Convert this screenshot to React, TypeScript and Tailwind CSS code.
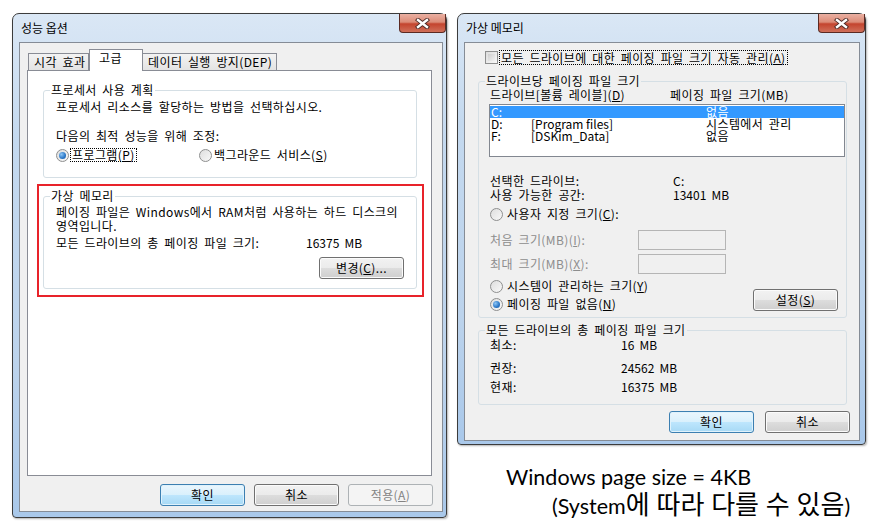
import React from "react";

const ui =
  "font-['Noto_Sans_CJK_KR',sans-serif] text-[12px] leading-[14px] text-black tracking-[0.4px] [word-spacing:2.5px]";

function CloseButton() {
  return (
    <div className="w-[47px] h-[19px] rounded-b-[4px] border border-t-0 border-[#5b2a22] bg-[linear-gradient(180deg,#eab0a2,#dc8c78_45%,#c4442e_55%,#d0705a)] flex items-center justify-center">
      <svg width="15" height="11" viewBox="0 0 15 11">
        <path d="M3 2 L12 9 M12 2 L3 9" stroke="#4a2a26" strokeWidth="4.2" strokeLinecap="square" />
        <path d="M3 2 L12 9 M12 2 L3 9" stroke="#ffffff" strokeWidth="2.4" strokeLinecap="square" />
      </svg>
    </div>
  );
}

function Frame({ title, className, children }: { title: string; className: string; children: React.ReactNode }) {
  return (
    <div
      className={`flex flex-col border border-[#3c3c3c] rounded-t-[7px] rounded-b-[4px] bg-[linear-gradient(180deg,#dae7f5,#c4d9ef_25%,#bcd3ec_70%,#a9c8ea)] shadow-[1px_1px_2px_rgba(0,0,0,0.3)] ${className}`}
    >
      <div className="h-[28px] flex items-start justify-between pl-[8px]">
        <div className="pt-[7px] tracking-normal [word-spacing:normal]">{title}</div>
        <CloseButton />
      </div>
      {children}
    </div>
  );
}

function Group({ legend, className, children }: { legend: string; className?: string; children: React.ReactNode }) {
  return (
    <fieldset className={`border border-[#d5dfe5] rounded-[3px] ${className ?? ""}`}>
      <legend className="ml-[6px] px-[1px] leading-[14px]">{legend}</legend>
      {children}
    </fieldset>
  );
}

function Radio({ checked, disabled }: { checked?: boolean; disabled?: boolean }) {
  return (
    <span
      className={`w-[13px] h-[13px] shrink-0 rounded-full border flex items-center justify-center ${
        disabled ? "border-[#b8b8b8] bg-[#f4f4f4]" : "border-[#8e8f8f] bg-[linear-gradient(135deg,#dedede,#f8f8f8)]"
      }`}
    >
      {checked && (
        <span className="w-[7px] h-[7px] rounded-full bg-[radial-gradient(circle_at_35%_35%,#8cc5f5,#2a76c6_60%,#1b5aa0)]" />
      )}
    </span>
  );
}

function Button({ label, kind = "normal", className }: { label: React.ReactNode; kind?: "default" | "normal" | "disabled"; className?: string }) {
  const look =
    kind === "default"
      ? "border-[#3c7fb1] bg-[linear-gradient(180deg,#eaf6fd,#d9f0fc_50%,#bee6fd_50%,#a7d9f5)] shadow-[inset_0_0_0_1px_#dff2fc]"
      : kind === "disabled"
      ? "border-[#adb2b5] bg-[#f4f4f4] text-[#838383]"
      : "border-[#707070] bg-[linear-gradient(180deg,#f2f2f2,#ebebeb_50%,#dddddd_50%,#cfcfcf)] shadow-[inset_0_0_0_1px_#fbfbfb]";
  return (
    <div className={`h-[22px] w-[85px] rounded-[3px] border flex items-center justify-center ${look} ${className ?? ""}`}>
      {label}
    </div>
  );
}

function PerformanceOptions() {
  return (
    <Frame title="성능 옵션" className="w-[435px] h-[505px]">
      <div className="flex-1 ml-[6px] mr-[3px] mb-[5px] border border-[#858c96] bg-[#f0f0f0] flex flex-col pt-[6px]">
        <div className="ml-[7px] mr-[10px] flex-1 flex flex-col">
          <div className="flex items-end h-[21px] pl-[1px]">
            <div className="w-[61px] h-[17px] border border-b-0 border-[#898c95] bg-[linear-gradient(180deg,#f3f3f3,#e3e3e3)] flex items-center pl-[5px]">
              시각 효과
            </div>
            <div className="relative z-10 w-[54px] h-[22px] -mb-[1px] border border-b-0 border-[#898c95] bg-white pl-[9px] pt-[1px]">
              고급
            </div>
            <div className="w-[134px] h-[17px] border border-b-0 border-l-0 border-[#898c95] bg-[linear-gradient(180deg,#f3f3f3,#e3e3e3)] flex items-center pl-[5px]">
              데이터 실행 방지(DEP)
            </div>
          </div>
          <div className="flex-1 border border-[#898c95] bg-white pt-[12px]">
            <Group legend="프로세서 사용 계획" className="ml-[15px] mr-[14px]">
              <div className="pl-[12px] pt-[3px] pb-[15px]">
                <div>프로세서 리소스를 할당하는 방법을 선택하십시오.</div>
                <div className="mt-[15px]">다음의 최적 성능을 위해 조정:</div>
                <div className="mt-[5px] flex items-center">
                  <div className="w-[143px] flex items-center">
                    <Radio checked />
                    <span className="ml-[1px] px-[1px] border border-dotted border-black leading-[12px]">
                      프로그램(<u>P</u>)
                    </span>
                  </div>
                  <Radio />
                  <span className="ml-[2px]">
                    백그라운드 서비스(<u>S</u>)
                  </span>
                </div>
              </div>
            </Group>
            <div className="mt-[6px] ml-[9px] mr-[7px] border-2 border-[#e8232a] pt-[3px] pl-[4px] pr-[5px] pb-[6px]">
              <Group legend="가상 메모리">
                <div className="pl-[12px] pt-[2px] pb-[9px]">
                  <div>
                    페이징 파일은 Windows에서 RAM처럼 사용하는 하드 디스크의
                    <br />
                    영역입니다.
                  </div>
                  <div className="mt-[3px] flex">
                    <span className="w-[250px]">모든 드라이브의 총 페이징 파일 크기:</span>
                    <span className="tracking-normal">16375 MB</span>
                  </div>
                  <div className="mt-[7px] flex justify-end pr-[12px]">
                    <Button label={<span>변경(<u>C</u>)...</span>} />
                  </div>
                </div>
              </Group>
            </div>
          </div>
        </div>
        <div className="mt-[8px] mb-[5px] pr-[9px] flex justify-end gap-[9px]">
          <Button label="확인" kind="default" />
          <Button label="취소" />
          <Button label={<span>적용(<u>A</u>)</span>} kind="disabled" />
        </div>
      </div>
    </Frame>
  );
}

const drives = [
  { d: "C:", label: "", size: "없음", sel: true },
  { d: "D:", label: "[Program files]", size: "시스템에서 관리" },
  { d: "F:", label: "[DSKim_Data]", size: "없음" },
];

function VirtualMemory() {
  return (
    <Frame title="가상 메모리" className="w-[409px] h-[432px]">
      <div className="flex-1 ml-[6px] mr-[5px] mb-[3px] border border-[#858c96] bg-[#f0f0f0] flex flex-col">
        <div className="pt-[7px] pl-[20px] flex items-center">
          <span className="w-[13px] h-[13px] border border-[#8e8f8f] bg-[linear-gradient(135deg,#dcdcdc,#f8f8f8)] p-[2px]">
            <span className="block w-full h-full bg-[linear-gradient(135deg,#cfcfcf,#f2f2f2)]" />
          </span>
          <span className="ml-[1px] px-[1px] border border-dotted border-black leading-[13px]">
            모든 드라이브에 대한 페이징 파일 크기 자동 관리(<u>A</u>)
          </span>
        </div>

        <Group legend="드라이브당 페이징 파일 크기" className="mt-[9px] ml-[13px] mr-[12px]">
          <div className="flex pl-[11px] leading-[13px]">
            <span className="w-[180px]">
              드라이브[볼륨 레이블](<u>D</u>)
            </span>
            <span>페이징 파일 크기(MB)</span>
          </div>
          <div className="mt-[3px] ml-[10px] w-[356px] h-[53px] border border-[#828790] bg-white pt-[1px] tracking-normal [word-spacing:normal]">
            {drives.map((r) => (
              <div
                key={r.d}
                className={`flex h-[12px] leading-[12px] pl-[1px] ${r.sel ? "bg-[#3399ff] text-white" : ""}`}
              >
                <span className="w-[40px]">{r.d}</span>
                <span className="w-[175px]">{r.label}</span>
                <span className="tracking-[0.4px] [word-spacing:2.5px]">{r.size}</span>
              </div>
            ))}
          </div>
          <div className="pl-[11px] pb-[6px]">
            <div className="mt-[17px] flex">
              <span className="w-[183px]">선택한 드라이브:</span>
              <span>C:</span>
            </div>
            <div className="flex">
              <span className="w-[183px]">사용 가능한 공간:</span>
              <span className="tracking-normal">13401 MB</span>
            </div>
            <div className="mt-[5px] flex items-center gap-[4px]">
              <Radio />
              <span>
                사용자 지정 크기(<u>C</u>):
              </span>
            </div>
            <div className="mt-[9px] flex items-center h-[20px] text-[#8d8d8d]">
              <span className="w-[148px]">
                처음 크기(MB)(<u>I</u>):
              </span>
              <span className="w-[88px] h-[20px] border border-[#b5b5b5] bg-[#f0f0f0]" />
            </div>
            <div className="mt-[4px] flex items-center h-[20px] text-[#8d8d8d]">
              <span className="w-[148px]">
                최대 크기(MB)(<u>X</u>):
              </span>
              <span className="w-[88px] h-[20px] border border-[#b5b5b5] bg-[#f0f0f0]" />
            </div>
            <div className="mt-[5px] flex items-end justify-between pr-[8px]">
              <div className="flex flex-col gap-[4px]">
                <div className="flex items-center gap-[4px]">
                  <Radio />
                  <span>
                    시스템이 관리하는 크기(<u>Y</u>)
                  </span>
                </div>
                <div className="flex items-center gap-[4px]">
                  <Radio checked />
                  <span>
                    페이징 파일 없음(<u>N</u>)
                  </span>
                </div>
              </div>
              <Button label={<span>설정(<u>S</u>)</span>} />
            </div>
          </div>
        </Group>

        <Group legend="모든 드라이브의 총 페이징 파일 크기" className="mt-[5px] ml-[13px] mr-[12px]">
          <div className="pl-[11px] pt-[1px] pb-[10px]">
            <div className="flex">
              <span className="w-[131px]">최소:</span>
              <span className="tracking-normal">16 MB</span>
            </div>
            <div className="mt-[9px] flex">
              <span className="w-[131px]">권장:</span>
              <span className="tracking-normal">24562 MB</span>
            </div>
            <div className="mt-[5px] flex">
              <span className="w-[131px]">현재:</span>
              <span className="tracking-normal">16375 MB</span>
            </div>
          </div>
        </Group>

        <div className="mt-[6px] pr-[9px] flex justify-end gap-[11px]">
          <Button label="확인" kind="default" />
          <Button label="취소" />
        </div>
      </div>
    </Frame>
  );
}

export default function App() {
  return (
    <div className={`w-[877px] h-[528px] bg-white flex gap-[10px] pl-[12px] pt-[13px] overflow-hidden ${ui}`}>
      <PerformanceOptions />
      <div className="flex flex-col">
        <VirtualMemory />
        <div className="mt-[19px] font-['Lato','Noto_Sans_CJK_KR',sans-serif] text-[21.5px] leading-[26px] text-black tracking-normal [word-spacing:normal]">
          <div className="pl-[49px]">Windows page size = 4KB</div>
          <div className="pl-[95px]">
            (System
            <span className="font-['Noto_Sans_CJK_KR',sans-serif] text-[26px] [word-spacing:1px]">에 따라 다를 수 있음</span>)
          </div>
        </div>
      </div>
    </div>
  );
}
